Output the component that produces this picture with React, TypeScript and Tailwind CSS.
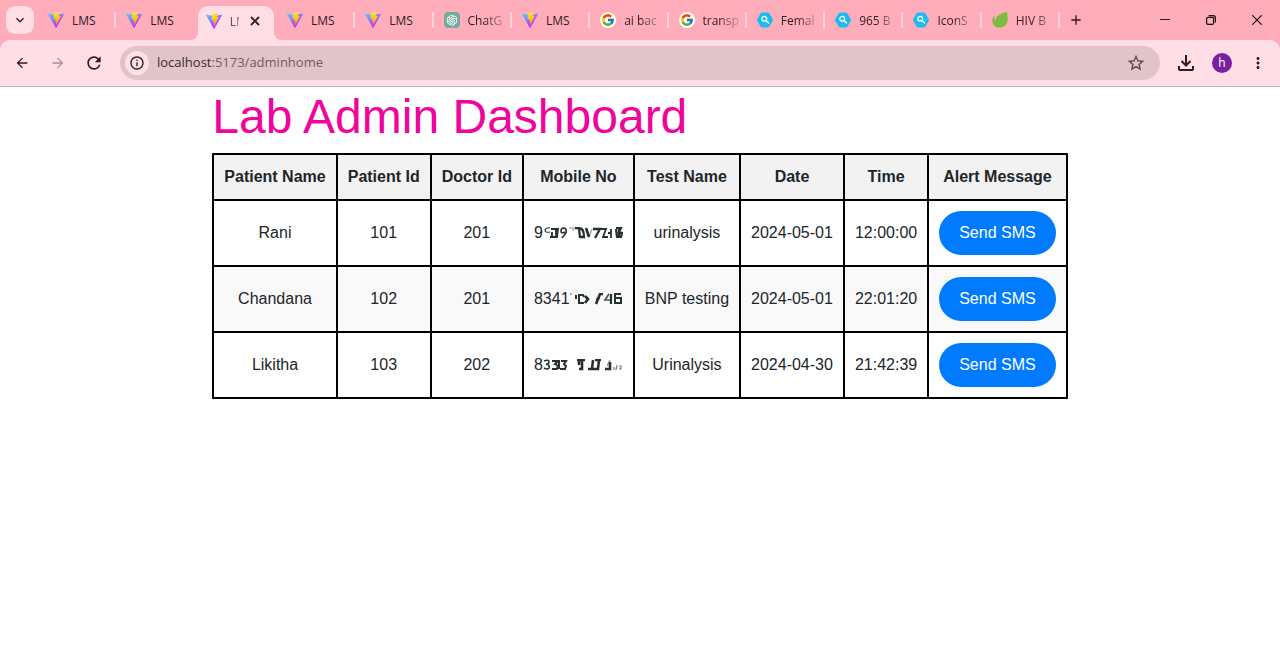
import type { ReactNode } from "react";
import { FcGoogle } from "react-icons/fc";
import { AiOutlineOpenAI } from "react-icons/ai";
import {
  MdAdd,
  MdArrowBack,
  MdArrowForward,
  MdInfoOutline,
  MdKeyboardArrowDown,
  MdMoreVert,
  MdRefresh,
  MdStarOutline,
} from "react-icons/md";

function ViteIcon() {
  return (
    <svg viewBox="0 0 256 257" className="size-4 shrink-0" aria-hidden="true">
      <defs>
        <linearGradient id="viteBody" x1="0%" x2="58%" y1="8%" y2="79%">
          <stop offset="0%" stopColor="#41D1FF" />
          <stop offset="100%" stopColor="#BD34FE" />
        </linearGradient>
        <linearGradient id="viteBolt" x1="43%" x2="50%" y1="2%" y2="89%">
          <stop offset="0%" stopColor="#FFEA83" />
          <stop offset="8%" stopColor="#FFDD35" />
          <stop offset="100%" stopColor="#FFA800" />
        </linearGradient>
      </defs>
      <path
        fill="url(#viteBody)"
        d="M255.153 37.938L134.897 252.976c-2.483 4.44-8.862 4.466-11.382.048L.875 37.958c-2.746-4.814 1.371-10.646 6.827-9.67l120.385 21.517a6.537 6.537 0 0 0 2.322-.004l117.867-21.483c5.438-.991 9.574 4.796 6.877 9.62Z"
      />
      <path
        fill="url(#viteBolt)"
        d="M185.432.063L96.44 17.501a3.268 3.268 0 0 0-2.634 3.014l-5.474 92.456a3.268 3.268 0 0 0 3.997 3.378l24.777-5.718c2.318-.535 4.413 1.507 3.936 3.838l-7.361 36.047c-.495 2.426 1.782 4.5 4.151 3.78l15.304-4.649c2.372-.72 4.652 1.36 4.15 3.788l-11.698 56.621c-.732 3.542 3.979 5.473 5.943 2.437l1.313-2.028l72.516-144.72c1.215-2.423-.88-5.186-3.54-4.672l-25.505 4.922c-2.396.462-4.435-1.77-3.759-4.114l16.646-57.705c.677-2.35-1.37-4.583-3.769-4.113Z"
      />
    </svg>
  );
}

function ChatIcon() {
  return (
    <span className="flex size-4 shrink-0 items-center justify-center rounded-sm bg-[#74aa9c] text-white">
      <AiOutlineOpenAI className="size-[14px]" />
    </span>
  );
}

function GoogleIcon() {
  return (
    <span className="flex size-4 shrink-0 items-center justify-center rounded-full bg-white">
      <FcGoogle className="size-[14px]" />
    </span>
  );
}

function IconScoutIcon() {
  return (
    <svg viewBox="0 0 16 16" className="size-4 shrink-0" aria-hidden="true">
      <path
        d="M5.200 2.500h5.600L14 8l-3.200 5.500H5.200L2 8z"
        fill="#1bbcf2"
        stroke="#1bbcf2"
        strokeWidth="4"
        strokeLinejoin="round"
      />
      <circle cx="7.200" cy="6.800" r="2.400" fill="none" stroke="#fff" strokeWidth="1.300" />
      <path d="M9.200 8.800 11.500 11" stroke="#fff" strokeWidth="1.500" strokeLinecap="round" />
    </svg>
  );
}

function LeafIcon() {
  return (
    <svg viewBox="0 0 16 16" className="size-4 shrink-0" aria-hidden="true">
      <path
        d="M13.600.2c.7-.3 1.300.1 1.500.8.6 2.200.9 5.200.6 7.600C15.200 12.800 12 15.800 8 15.800 3.600 15.800.3 12.600.3 8.700c0-1.600.5-3.200 1.500-4.400.3-.3.800-.1.700.4-.3 1.500-.1 3 .6 4.200C3.300 4.600 8.500 1.300 13.600.2Z"
        fill="#7fba42"
      />
    </svg>
  );
}

type Tab = { label: string; icon: ReactNode; active?: boolean; divider?: boolean };

const tabs: Tab[] = [
  { label: "LMS", icon: <ViteIcon />, divider: true },
  { label: "LMS", icon: <ViteIcon /> },
  { label: "LM", icon: <ViteIcon />, active: true },
  { label: "LMS", icon: <ViteIcon />, divider: true },
  { label: "LMS", icon: <ViteIcon />, divider: true },
  { label: "ChatG", icon: <ChatIcon />, divider: true },
  { label: "LMS", icon: <ViteIcon />, divider: true },
  { label: "ai bac", icon: <GoogleIcon />, divider: true },
  { label: "transp", icon: <GoogleIcon />, divider: true },
  { label: "Femal", icon: <IconScoutIcon />, divider: true },
  { label: "965 B", icon: <IconScoutIcon />, divider: true },
  { label: "IconS", icon: <IconScoutIcon />, divider: true },
  { label: "HIV B", icon: <LeafIcon />, divider: true },
];

function BrowserTab({ label, icon, active, divider }: Tab) {
  if (active) {
    return (
      <div className="relative mx-[3px] flex h-[34px] min-w-0 flex-1 items-center self-end rounded-t-[10px] bg-[#ffdfe5] pb-1 pl-2">
        <span className="absolute bottom-0 -left-2 size-2 bg-[radial-gradient(circle_at_0_0,transparent_8px,#ffdfe5_8px)]" />
        <span className="absolute -right-2 bottom-0 size-2 bg-[radial-gradient(circle_at_100%_0,transparent_8px,#ffdfe5_8px)]" />
        <a href="#" className="flex min-w-0 items-center gap-2">
          {icon}
          <span className="w-[9px] overflow-hidden pt-[2px] whitespace-nowrap text-[#4a3a40] [mask-image:linear-gradient(to_right,black,#0008)]">
            {label}
          </span>
        </a>
        <button type="button" aria-label="Close tab" className="ml-[11px]">
          <svg viewBox="0 0 10 10" className="size-[10px]" stroke="currentColor" strokeWidth="1.800" aria-hidden="true">
            <path d="M1 1l8 8M9 1 1 9" />
          </svg>
        </button>
      </div>
    );
  }
  return (
    <div className="flex h-10 min-w-0 flex-1 items-center pl-[10px]">
      <a href="#" className="flex min-w-0 flex-1 items-center gap-2">
        {icon}
        <span
          className={
            label === "LMS"
              ? "pt-[2px] whitespace-nowrap"
              : "pt-[2px] whitespace-nowrap [mask-image:linear-gradient(to_right,black_16px,#0004_34px)]"
          }
        >
          {label}
        </span>
      </a>
      <span className={divider ? "h-4 w-[2px] shrink-0 bg-[#ffd3db]" : "h-4 w-[2px] shrink-0"} />
    </div>
  );
}

function BrowserChrome() {
  return (
    <header className="bg-[#ffadba] font-['Open_Sans','Noto_Sans',sans-serif] text-xs text-[#2c1d22]">
      <div className="flex h-10 items-center">
        <button
          type="button"
          aria-label="Search tabs"
          className="mr-1 ml-[6px] flex size-7 shrink-0 items-center justify-center rounded-[9px] bg-[#ffdfe5]"
        >
          <MdKeyboardArrowDown className="size-4" stroke="currentColor" />
        </button>
        <nav aria-label="Tabs" className="flex min-w-0 flex-1">
          {tabs.map((tab, i) => (
            <BrowserTab key={i} {...tab} />
          ))}
        </nav>
        <button type="button" aria-label="New tab" className="mr-[50px] flex h-10 w-8 shrink-0 items-center justify-center">
          <MdAdd className="size-4" stroke="currentColor" />
        </button>
        <button type="button" aria-label="Minimize" className="flex h-10 w-[46px] shrink-0 items-center justify-center">
          <svg viewBox="0 0 10 10" className="size-[10px]" stroke="currentColor" aria-hidden="true">
            <path d="M0 4.500h10" />
          </svg>
        </button>
        <button type="button" aria-label="Restore" className="flex h-10 w-[46px] shrink-0 items-center justify-center">
          <svg viewBox="0 0 10 10" className="size-[10px]" stroke="#160c10" strokeWidth="1.200" fill="none" aria-hidden="true">
            <rect x=".6" y="2.400" width="7" height="7" rx="1.300" />
            <path d="M2.600.6h4.400a2.400 2.400 0 0 1 2.400 2.400v4.400" />
          </svg>
        </button>
        <button type="button" aria-label="Close" className="flex h-10 w-[46px] shrink-0 items-center justify-center">
          <svg viewBox="0 0 10 10" className="size-[10px]" stroke="#160c10" strokeWidth="1.200" aria-hidden="true">
            <path d="M.3.3l9.400 9.400M9.700.3.3 9.700" />
          </svg>
        </button>
      </div>
      <div className="flex h-[47px] items-center rounded-t-[10px] border-b border-[#c9b3b9] bg-[#ffdfe5] pr-[13px] pl-[14px]">
        <button type="button" aria-label="Back" className="mr-5">
          <MdArrowBack className="size-4" />
        </button>
        <button type="button" aria-label="Forward" className="mr-[18px] text-[#a88f96]">
          <MdArrowForward className="size-4" />
        </button>
        <button type="button" aria-label="Reload" className="mr-4">
          <MdRefresh className="size-5" />
        </button>
        <div className="flex h-[34px] min-w-0 flex-1 items-center rounded-full bg-[#e0c4c9] pr-[14px] pl-[5px]">
          <button
            type="button"
            aria-label="Site information"
            className="mr-2 flex size-6 shrink-0 items-center justify-center rounded-full bg-[#ffdfe5]"
          >
            <MdInfoOutline className="size-4" />
          </button>
          <a href="#" className="flex-1 text-[13px] text-[#6e5c62]">
            <span className="text-[#3a2a30]">localhost</span>:5173/adminhome
          </a>
          <button type="button" aria-label="Bookmark" className="text-[#55464b]">
            <MdStarOutline className="size-5" />
          </button>
        </div>
        <button type="button" aria-label="Downloads" className="mx-[15px]">
          <svg viewBox="0 0 22 22" className="size-[22px]" fill="none" stroke="currentColor" strokeWidth="2" aria-hidden="true">
            <path d="M11 3v10M6.500 9l4.500 4.500L15.500 9M4 14v3.200q0 .8.8.8h12.400q.8 0 .8-.8V14" />
          </svg>
        </button>
        <button
          type="button"
          aria-label="Profile"
          className="mr-[17px] flex size-5 items-center justify-center rounded-full bg-[#7b1fa2] text-xs text-white"
        >
          h
        </button>
        <button type="button" aria-label="Menu">
          <MdMoreVert className="size-[18px]" />
        </button>
      </div>
    </header>
  );
}

/* Hidden part of each mobile number, drawn as rubbed-out ink. */
const smudges = {
  a: (
    <svg viewBox="0 0 80 12" className="h-3 w-20" aria-hidden="true">
      <g fill="none" stroke="#26302c" strokeWidth="1.600" filter="url(#rub)">
        <path d="M7 5q-5 1-5-2 1-3 5-2" strokeWidth="1.200" />
        <path d="M8 2h7l-1 8H7M13 2v9M9 5v6" strokeWidth="1.800" />
        <path d="M22 5q-4 2-4-1 0-3 3-3 3 1 2 5l-4 5" />
        <path d="M26 1h5l-1 3" opacity=".35" />
        <path d="M32 1h4l1 10M36 1q5 0 5 9h-4" strokeWidth="2.300" />
        <path d="M43 1l3 9" strokeWidth="2.600" />
        <path d="M46 10l3-8" opacity=".4" />
        <path d="M50 2h7l-5 9" strokeWidth="2.300" />
        <path d="M58 2h5l-3 8h5M68 2v9M65 6h3" strokeWidth="1.800" />
        <path d="M73 1h5l-2 4 3 1-1 4h-4l-1-8M76 2v8" strokeWidth="2.200" />
      </g>
    </svg>
  ),
  b: (
    <svg viewBox="0 0 53 12" className="h-3 w-[53px]" aria-hidden="true">
      <g fill="none" stroke="#26302c" strokeWidth="1.700" filter="url(#rub)">
        <path d="M0 1h2" opacity=".5" />
        <path d="M6 2v4M9 1v9M8 2h5l1 2M8 10h6" strokeWidth="2" />
        <path d="M15 3l3 3-3 4" strokeWidth="2.600" />
        <path d="M33 1h-3l-4 10" strokeWidth="2.600" />
        <path d="M26 6l4-1M39 1l-4 6h6" opacity=".8" />
        <path d="M41 1v10" strokeWidth="2.200" />
        <path d="M51 1h-6v9h6V5h-5" strokeWidth="2" />
      </g>
    </svg>
  ),
  c: (
    <svg viewBox="0 0 80 12" className="h-3 w-20" aria-hidden="true">
      <g fill="none" stroke="#26302c" strokeWidth="1.600" filter="url(#rub)">
        <path d="M1 2q5-2 5 1 0 2-3 2 4 1 3 4-2 2-5 0" />
        <path d="M9 2h6l-3 3q4 1 2 5H9M16 1v9M18 2h5l-2 3 2 2-1 3h-5" strokeWidth="2" />
        <path d="M34 1h8M36 1v5M39 1v9h-3" strokeWidth="2.600" />
        <path d="M50 1l-1 9h-4M52 1h6M56 1l-1 9h-5" strokeWidth="2.500" />
        <path d="M67 1l-3 6" opacity=".45" />
        <path d="M67 3v7h-5" strokeWidth="2.600" />
        <path d="M71 8v3M74 6l-1 5M76 7h2v3h-2" strokeWidth="1.200" opacity=".65" />
      </g>
    </svg>
  ),
};

const rows = [
  { name: "Rani", id: "101", doctor: "201", mobile: "9", rest: smudges.a, test: "urinalysis", date: "2024-05-01", time: "12:00:00" },
  { name: "Chandana", id: "102", doctor: "201", mobile: "8341", rest: smudges.b, test: "BNP testing", date: "2024-05-01", time: "22:01:20" },
  { name: "Likitha", id: "103", doctor: "202", mobile: "8", rest: smudges.c, test: "Urinalysis", date: "2024-04-30", time: "21:42:39" },
];

const headings = ["Patient Name", "Patient Id", "Doctor Id", "Mobile No", "Test Name", "Date", "Time", "Alert Message"];

const cell = "border-2 border-black p-[10px]";

export default function App() {
  return (
    <div className="min-h-screen bg-white">
      <svg width="0" height="0" className="absolute" aria-hidden="true">
        <filter id="rub">
          <feGaussianBlur stdDeviation="0.6" />
        </filter>
      </svg>
      <BrowserChrome />
      <main className="mx-auto w-fit font-['Liberation_Sans',Arial,sans-serif] text-base text-[#212529]">
        <h1 className="mb-[6px] text-5xl leading-[60px] text-[#f0059c]">Lab Admin Dashboard</h1>
        <table className="border-collapse text-center whitespace-nowrap">
          <thead>
            <tr className="bg-[#f2f2f2]">
              {headings.map((h) => (
                <th key={h} scope="col" className={cell}>
                  {h}
                </th>
              ))}
            </tr>
          </thead>
          <tbody>
            {rows.map((r) => (
              <tr key={r.id} className="even:bg-[#f9f9f9]">
                <td className={cell}>{r.name}</td>
                <td className={cell}>{r.id}</td>
                <td className={cell}>{r.doctor}</td>
                <td className={cell}>
                  <span className="flex items-center">
                    {r.mobile}
                    {r.rest}
                  </span>
                </td>
                <td className={cell}>{r.test}</td>
                <td className={cell}>{r.date}</td>
                <td className={cell}>{r.time}</td>
                <td className={cell}>
                  <button type="button" className="block rounded-full bg-[#007bff] px-5 py-[10px] text-white">
                    Send SMS
                  </button>
                </td>
              </tr>
            ))}
          </tbody>
        </table>
      </main>
    </div>
  );
}
